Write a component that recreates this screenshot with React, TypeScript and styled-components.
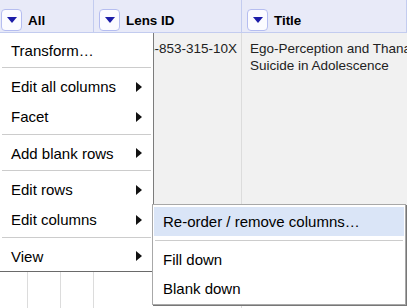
import React from 'react';
import styled, { createGlobalStyle } from 'styled-components';

// Page-wide reset
const GlobalStyle = createGlobalStyle`
	html, body {
		margin: 0;
		padding: 0;
		background: #ffffff;
	}
	body {
		font-family: 'Liberation Sans', Arial, sans-serif;
		color: #111;
	}
	* {
		box-sizing: border-box;
	}
`;

// Frame of the data table view
const Page = styled.div`
	position: relative;
	width: 407px;
	height: 308px;
	overflow: hidden;
	background: #ffffff;
`;

// Column header strip
const HeaderRow = styled.div`
	display: grid;
	grid-template-columns: 94px 148px 1fr;
	height: 33px;
	background: #e8eaf8;
	border-bottom: 1px solid #c3ccef;
`;

const HeaderCell = styled.div<{ first?: boolean }>`
	display: flex;
	align-items: center;
	gap: 6px;
	height: 32px;
	padding: 9px 0 1px ${(props) => (props.first ? '1px' : '5px')};
	border-right: 1px solid #c3ccef;
	font-size: 13.4px;
	font-weight: bold;
	color: #000;
	white-space: nowrap;
`;

// Little dropdown button in each header
const DropButton = styled.span`
	display: flex;
	align-items: center;
	justify-content: center;
	flex: none;
	width: 21px;
	height: 22px;
	background: #fbfbff;
	border: 1px solid #b5bdf0;
	border-radius: 4px;

	&::after {
		content: '';
		border-left: 5px solid transparent;
		border-right: 5px solid transparent;
		border-top: 6px solid #1c1ca8;
	}
`;

// Table body
const BodyRow = styled.div<{ shaded?: boolean; height: number }>`
	display: grid;
	grid-template-columns: 28px 33px 33px 148px 1fr;
	height: ${(props) => props.height}px;
	background: ${(props) => (props.shaded ? '#f1f1f1' : '#ffffff')};
`;

const BodyCell = styled.div`
	padding: 7px 8px;
	border-right: 1px solid #dcdcdc;
	font-size: 13.5px;
	line-height: 17px;
	color: #222;
	overflow: hidden;
`;

const NoWrapCell = styled(BodyCell)`
	white-space: nowrap;
	padding-left: 11px;
`;

const TextCell = styled(BodyCell)`
	border-right: none;
	white-space: nowrap;
`;

// Drop-down menu panels
const MainMenu = styled.div`
	position: absolute;
	left: 0;
	top: 33px;
	width: 154px;
	padding: 2px 0 0;
	background: #ffffff;
	border-right: 1px solid #7c7c7c;
	border-bottom: 1px solid #6a6a6a;
	z-index: 5;
`;

const SubMenu = styled.div`
	position: absolute;
	left: 152px;
	top: 204px;
	width: 254px;
	padding: 2px 1px 1px;
	background: #ffffff;
	border: 1px solid #a8a8a8;
	box-shadow: 1px 1px 0 #777;
	z-index: 6;
`;

const MenuItem = styled.div<{ active?: boolean; small?: boolean }>`
	display: flex;
	align-items: center;
	justify-content: space-between;
	height: ${(props) => (props.small ? '29px' : '30px')};
	padding: 0 11px 0 ${(props) => (props.small ? '9px' : '11px')};
	font-size: 15px;
	color: #000;
	white-space: nowrap;
	background: ${(props) => (props.active ? '#dae5f7' : 'transparent')};
`;

const Arrow = styled.span`
	width: 0;
	height: 0;
	border-top: 5px solid transparent;
	border-bottom: 5px solid transparent;
	border-left: 6px solid #111;
`;

const Separator = styled.div<{ wide?: boolean }>`
	height: 1px;
	background: #cccccc;
	margin: ${(props) => (props.wide ? '4px 1px' : '2px 2px 3.5px')};
`;

export default function App() {
    return (
        <Page>
            <GlobalStyle />
            <HeaderRow>
                <HeaderCell first>
                    <DropButton />
                    All
                </HeaderCell>
                <HeaderCell>
                    <DropButton />
                    Lens ID
                </HeaderCell>
                <HeaderCell>
                    <DropButton />
                    Title
                </HeaderCell>
            </HeaderRow>

            <BodyRow shaded height={217}>
                <BodyCell />
                <BodyCell />
                <BodyCell />
                <NoWrapCell>026-496-853-315-10X</NoWrapCell>
                <TextCell>
                    Ego-Perception and Thanatos
                    <br />
                    Suicide in Adolescence
                </TextCell>
            </BodyRow>
            <BodyRow height={80}>
                <BodyCell />
                <BodyCell />
                <BodyCell />
                <BodyCell />
                <TextCell />
            </BodyRow>

            <MainMenu>
                <MenuItem>Transform…</MenuItem>
                <Separator />
                <MenuItem>
                    Edit all columns <Arrow />
                </MenuItem>
                <MenuItem>
                    Facet <Arrow />
                </MenuItem>
                <Separator />
                <MenuItem>
                    Add blank rows <Arrow />
                </MenuItem>
                <Separator />
                <MenuItem>
                    Edit rows <Arrow />
                </MenuItem>
                <MenuItem>
                    Edit columns <Arrow />
                </MenuItem>
                <Separator />
                <MenuItem>
                    View <Arrow />
                </MenuItem>
            </MainMenu>

            <SubMenu>
                <MenuItem small active>
                    Re-order / remove columns…
                </MenuItem>
                <Separator wide />
                <MenuItem small>Fill down</MenuItem>
                <MenuItem small>Blank down</MenuItem>
            </SubMenu>
        </Page>
    );
}
